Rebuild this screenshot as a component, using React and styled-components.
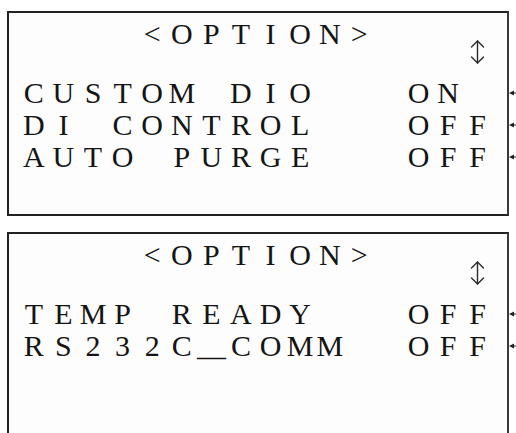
import React from "react";
import styled, { createGlobalStyle } from "styled-components";

const Global = createGlobalStyle`
  html, body { margin: 0; padding: 0; background: #ffffff; }
`;

const CELL = 29.6;

const Page = styled.main`
  box-sizing: border-box;
  height: 433px;
  overflow: hidden;
  display: flex;
  flex-direction: column;
  gap: 16px;
  padding: 11px 0 0 7px;
`;

const Screen = styled.section`
  flex: none;
  box-sizing: border-box;
  width: 502px;
  height: ${(p) => p.$h}px;
  border: 2px solid #222222;
  border-right-color: #3a3a3a;
  background: #fdfdfd;
  padding: 5px 0 0 10px;
  font-family: "Liberation Serif", "Times New Roman", serif;
  font-size: 30px;
  color: #151515;
  display: flex;
  flex-direction: column;
`;

const Header = styled.div`
  display: flex;
  align-items: flex-start;
  height: 59px;
`;

const Line = styled.div`
  position: relative;
  display: flex;
  height: 32px;
  line-height: 32px;
  white-space: pre;
`;

const Cell = styled.span`
  flex: none;
  width: ${CELL}px;
  text-align: center;
`;

const Under = styled.span`
  display: inline-block;
  transform: scaleX(1.9);
`;

const ArrowCell = styled.span`
  flex: none;
  width: ${CELL}px;
  display: flex;
  justify-content: center;
  padding-top: 21px;
`;

const Leader = styled.svg`
  position: absolute;
  left: calc(100% + 2px);
  top: 13px;
  width: 12px;
  height: 6px;
  overflow: visible;
`;

function Chars({ text, from = 0 }) {
  const out = [];
  for (let i = 0; i < from; i++) out.push(<Cell key={"b" + i}> </Cell>);
  text.split("").forEach((ch, i) =>
    out.push(<Cell key={i}>{ch === "_" ? <Under>_</Under> : ch}</Cell>)
  );
  return out;
}

function UpDown() {
  return (
    <svg width="17" height="26" viewBox="0 0 17 26" fill="none" stroke="#2a2a2a" strokeWidth="1.4" strokeLinecap="round" strokeLinejoin="round">
      <path d="M8.5 2 V24" />
      <path d="M2.5 8 L8.5 2 L14.5 8" />
      <path d="M2.5 18 L8.5 24 L14.5 18" />
    </svg>
  );
}

function Row({ label, value }) {
  const cells = label.padEnd(13, " ") + value;
  return (
    <Line>
      <Chars text={cells} />
      <Leader viewBox="0 0 12 6">
        <path d="M0 3 L5 0.5 L5 5.5 Z" fill="#222" />
        <path d="M4 3 H12" stroke="#222" strokeWidth="1" />
      </Leader>
    </Line>
  );
}

function OptionScreen({ rows, h }) {
  return (
    <Screen $h={h}>
      <Header>
        <Line>
          <Chars text="<OPTION>" from={4} />
          <Cell> </Cell>
          <Cell> </Cell>
          <Cell> </Cell>
        </Line>
        <ArrowCell>
          <UpDown />
        </ArrowCell>
      </Header>
      {rows.map((r) => (
        <Row key={r[0]} label={r[0]} value={r[1]} />
      ))}
    </Screen>
  );
}

export default function App() {
  return (
    <Page>
      <Global />
      <OptionScreen
        h={205}
        rows={[
          ["CUSTOM DIO", "ON"],
          ["DI CONTROL", "OFF"],
          ["AUTO PURGE", "OFF"],
        ]}
      />
      <OptionScreen
        h={230}
        rows={[
          ["TEMP READY", "OFF"],
          ["RS232C_COMM", "OFF"],
        ]}
      />
    </Page>
  );
}
